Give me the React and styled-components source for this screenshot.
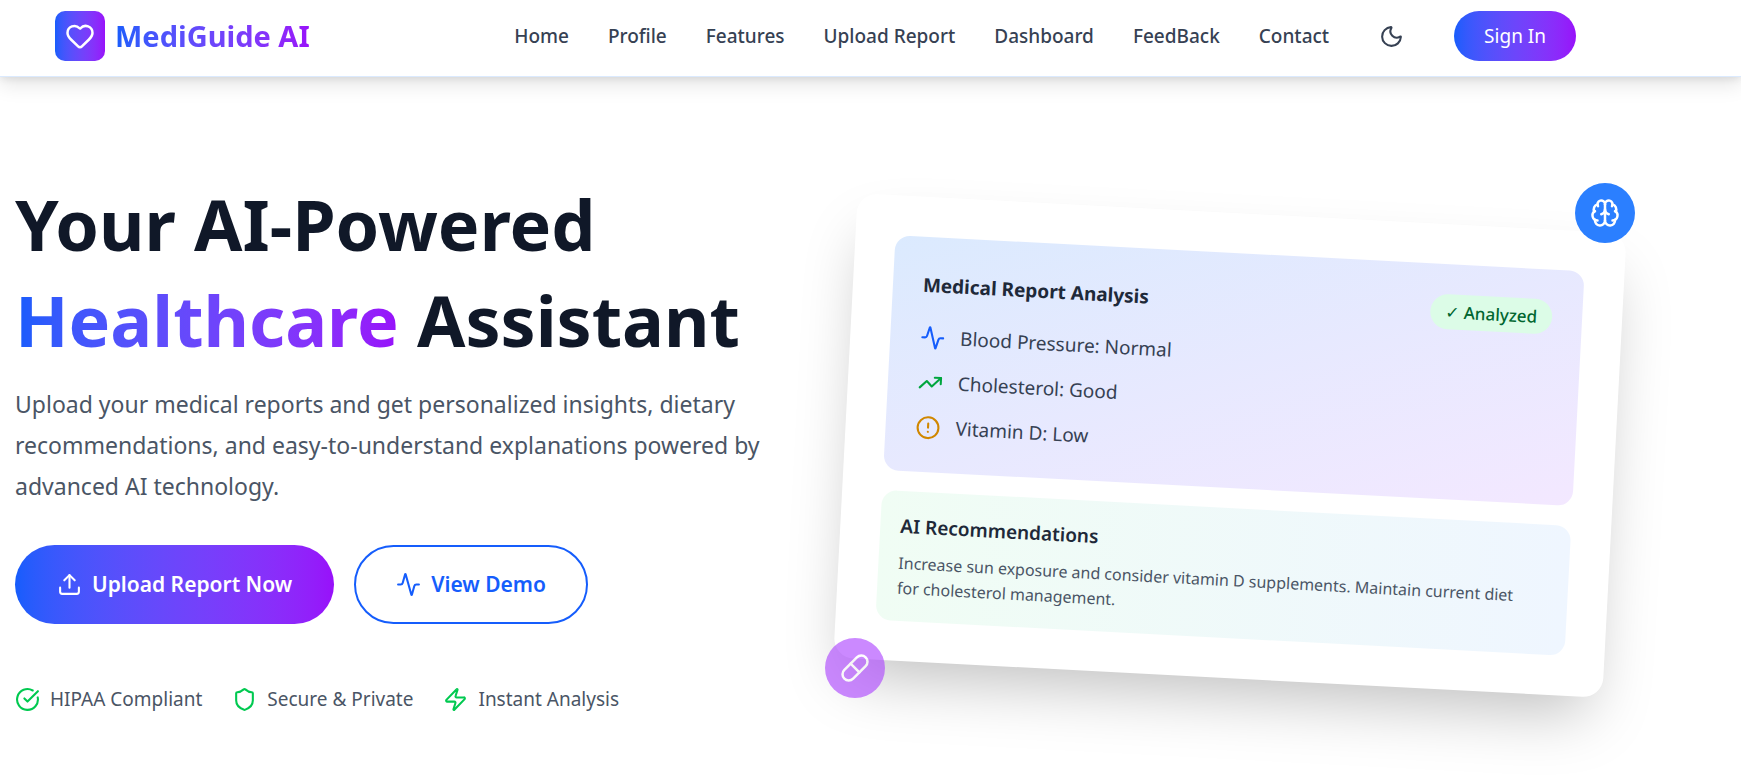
import React from 'react';
import styled, { createGlobalStyle } from 'styled-components';
import {
  Heart, Moon, Upload, Activity, CircleCheckBig, Shield, Zap,
  TrendingUp, CircleAlert, Brain, Pill,
} from 'lucide-react';

const brandGradient = 'linear-gradient(to right in oklab, #155dfc, #9810fa)';

const GlobalStyle = createGlobalStyle`
  *, *::before, *::after { box-sizing: border-box; }
  body {
    margin: 0;
    background: #fff;
    color: #101828;
    font-family: "Segoe UI", "Noto Sans", sans-serif;
    overflow-x: hidden;
  }
  h1, h2, h3, p, ul { margin: 0; padding: 0; }
  ul { list-style: none; }
  button { font-family: inherit; border: 0; cursor: pointer; }
  a { color: inherit; text-decoration: none; }
  svg { flex-shrink: 0; }
`;

const Header = styled.header`
  display: flex;
  align-items: center;
  justify-content: space-between;
  padding: 11px 165px 15px 55px;
  background: #fff;
  border-bottom: 1px solid #dbeafe;
  box-shadow: 0 8px 19px rgba(0, 0, 0, 0.1), 0 1px 8px rgba(0, 0, 0, 0.1);
`;

const Brand = styled.a`
  display: flex;
  align-items: center;
  gap: 10px;
`;

const BrandMark = styled.span`
  display: grid;
  place-items: center;
  width: 50px;
  height: 50px;
  border-radius: 10px;
  background: ${brandGradient};
  color: #fff;
`;

const GradientText = styled.span`
  background: ${brandGradient};
  background-clip: text;
  -webkit-background-clip: text;
  color: transparent;
`;

const BrandName = styled(GradientText)`
  font-size: 29px;
  line-height: 40px;
  font-weight: 700;
`;

const Nav = styled.nav`
  display: flex;
  align-items: center;
  gap: 40px;
`;

const NavList = styled.ul`
  display: flex;
  gap: 39px;
`;

const NavLink = styled.a`
  font-size: 19px;
  line-height: 30px;
  font-weight: 500;
  color: #364153;
  white-space: nowrap;
`;

const IconButton = styled.button`
  display: grid;
  padding: 10px;
  background: none;
  border-radius: 10px;
  color: #364153;
`;

const SignIn = styled.button`
  padding: 10px 30px;
  border-radius: 25px;
  background: ${brandGradient};
  color: #fff;
  font-size: 19px;
  line-height: 30px;
`;

const Hero = styled.main`
  display: grid;
  grid-template-columns: 1fr 1fr;
  align-items: center;
  gap: 60px;
  max-width: 1741px;
  padding: 99px 126px 66px 15px;
`;

const Title = styled.h1`
  font-size: 70px;
  line-height: 96px;
  font-weight: 700;
  margin-bottom: 16px;
`;

const Lead = styled.p`
  font-size: 23px;
  line-height: 41px;
  color: #4a5565;
  margin-bottom: 38px;
`;

const Actions = styled.div`
  display: flex;
  gap: 20px;
  margin-bottom: 60px;
`;

const ActionButton = styled.button`
  display: flex;
  align-items: center;
  gap: 10px;
  padding: 22px 42px;
  border-radius: 40px;
  background: ${brandGradient};
  color: #fff;
  font-size: 21px;
  line-height: 35px;
  font-weight: 600;
`;

const OutlineButton = styled(ActionButton)`
  padding: 20px 40px;
  border: 2px solid #155dfc;
  background: #fff;
  color: #155dfc;
`;

const TrustList = styled.ul`
  display: flex;
  gap: 30px;
`;

const TrustItem = styled.li`
  display: flex;
  align-items: center;
  gap: 10px;
  font-size: 19px;
  line-height: 30px;
  color: #4a5565;

  svg { color: #00c950; }
`;

const Showcase = styled.div`
  position: relative;
`;

const Card = styled.article`
  display: grid;
  gap: 20px;
  padding: 40px;
  border-radius: 20px;
  background: #fff;
  box-shadow: 0 31px 62px -15px rgba(0, 0, 0, 0.25);
  transform: rotate(3deg);
`;

const ReportPanel = styled.section`
  padding: 30px;
  border-radius: 15px;
  background: linear-gradient(to bottom right in oklab, #dbeafe, #f3e8ff);
`;

const ReportHeader = styled.div`
  display: flex;
  align-items: center;
  justify-content: space-between;
  margin-bottom: 20px;
`;

const ReportTitle = styled.h2`
  font-size: 19px;
  line-height: 30px;
  font-weight: 700;
  color: #1e2939;
`;

const StatusPill = styled.span`
  padding: 5px 15px;
  border-radius: 18px;
  background: #dcfce7;
  color: #016630;
  font-size: 17px;
  line-height: 25px;
  font-weight: 500;
`;

const Results = styled.ul`
  display: grid;
  gap: 15px;
`;

const Result = styled.li`
  display: flex;
  align-items: center;
  gap: 15px;
  font-size: 19px;
  line-height: 30px;
  color: #364153;

  svg { color: ${({ $tone }) => $tone}; }
`;

const AdvicePanel = styled.section`
  padding: 20px;
  border-radius: 15px;
  background: linear-gradient(to right in oklab, #f0fdf4, #eff6ff);
`;

const AdviceTitle = styled.h3`
  font-size: 19px;
  line-height: 30px;
  font-weight: 600;
  color: #1e2939;
  margin-bottom: 10px;
`;

const AdviceText = styled.p`
  font-size: 16px;
  line-height: 25px;
  color: #4a5565;
`;

const FloatingBadge = styled.span`
  position: absolute;
  display: grid;
  place-items: center;
  width: 60px;
  height: 60px;
  border-radius: 50%;
  color: #fff;
`;

const BrainBadge = styled(FloatingBadge)`
  top: -30px;
  right: -20px;
  background: #2b7fff;
`;

const PillBadge = styled(FloatingBadge)`
  bottom: -20px;
  left: -20px;
  background: #ad46ff;
  opacity: 0.63;
`;

const links = ['Home', 'Profile', 'Features', 'Upload Report', 'Dashboard', 'FeedBack', 'Contact'];

const trust = [
  { label: 'HIPAA Compliant', Icon: CircleCheckBig },
  { label: 'Secure & Private', Icon: Shield },
  { label: 'Instant Analysis', Icon: Zap },
];

const results = [
  { label: 'Blood Pressure: Normal', Icon: Activity, tone: '#155dfc' },
  { label: 'Cholesterol: Good', Icon: TrendingUp, tone: '#00a63e' },
  { label: 'Vitamin D: Low', Icon: CircleAlert, tone: '#d08700' },
];

export default function App() {
  return (
    <>
      <GlobalStyle />
      <Header>
        <Brand href="#">
          <BrandMark><Heart size={30} /></BrandMark>
          <BrandName>MediGuide AI</BrandName>
        </Brand>
        <Nav>
          <NavList>
            {links.map((label) => (
              <li key={label}><NavLink href="#">{label}</NavLink></li>
            ))}
          </NavList>
          <IconButton type="button" aria-label="Toggle dark mode"><Moon size={25} /></IconButton>
          <SignIn type="button">Sign In</SignIn>
        </Nav>
      </Header>

      <Hero>
        <div>
          <Title>Your AI-Powered <br /><GradientText>Healthcare</GradientText> Assistant</Title>
          <Lead>
            Upload your medical reports and get personalized insights, dietary
            recommendations, and easy-to-understand explanations powered by
            advanced AI technology.
          </Lead>
          <Actions>
            <ActionButton type="button"><Upload size={25} />Upload Report Now</ActionButton>
            <OutlineButton type="button"><Activity size={25} />View Demo</OutlineButton>
          </Actions>
          <TrustList>
            {trust.map(({ label, Icon }) => (
              <TrustItem key={label}><Icon size={25} />{label}</TrustItem>
            ))}
          </TrustList>
        </div>

        <Showcase>
          <Card>
            <ReportPanel>
              <ReportHeader>
                <ReportTitle>Medical Report Analysis</ReportTitle>
                <StatusPill>✓ Analyzed</StatusPill>
              </ReportHeader>
              <Results>
                {results.map(({ label, Icon, tone }) => (
                  <Result key={label} $tone={tone}><Icon size={25} />{label}</Result>
                ))}
              </Results>
            </ReportPanel>
            <AdvicePanel>
              <AdviceTitle>AI Recommendations</AdviceTitle>
              <AdviceText>
                Increase sun exposure and consider vitamin D supplements. Maintain current diet
                <br />
                for cholesterol management.
              </AdviceText>
            </AdvicePanel>
          </Card>
          <BrainBadge><Brain size={30} /></BrainBadge>
          <PillBadge><Pill size={30} /></PillBadge>
        </Showcase>
      </Hero>
    </>
  );
}
